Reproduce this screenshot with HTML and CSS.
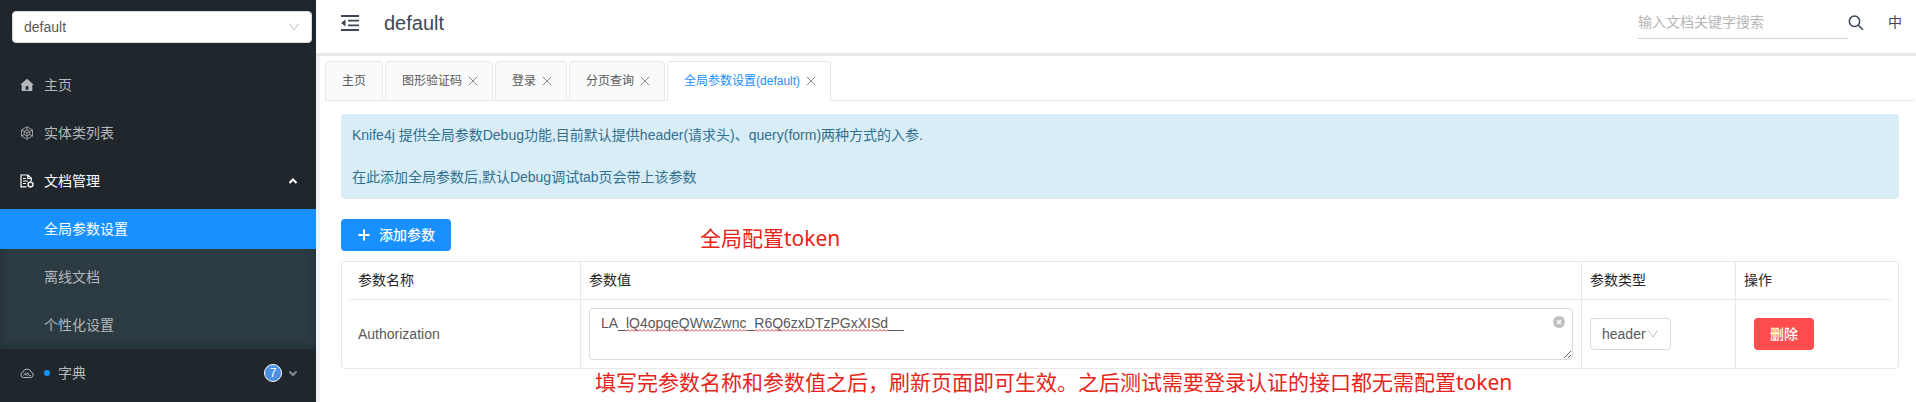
FILE: index.html
```html
<!DOCTYPE html>
<html lang="zh-CN">
<head>
<meta charset="utf-8">
<meta name="viewport" content="width=device-width, initial-scale=1">
<title>全局参数设置</title>
<link rel="stylesheet" href="styles.css">
</head>
<body>
<div class="layout">
  <aside class="sidebar">
    <div class="picker picker-group">
      <select class="picker-field" aria-label="分组">
        <option>default</option>
      </select>
      <svg class="picker-arrow" viewBox="0 0 12 12" aria-hidden="true"><path d="M1.5 2.5 6 9l4.5-6.5"/></svg>
    </div>
    <nav class="menu">
      <a class="menu-item" href="#home">
        <svg class="menu-icon" viewBox="0 0 14 14" aria-hidden="true"><path fill="currentColor" fill-rule="evenodd" d="M7 .8 13.2 6.300V7H12.300V13H1.700V7H.8V6.300ZM5.600 11.800H8.400V8.200H5.600Z"/></svg>
        <span>主页</span>
      </a>
      <a class="menu-item" href="#models">
        <svg class="menu-icon" viewBox="0 0 14 14" fill="none" stroke="currentColor" aria-hidden="true"><path stroke-width=".8" d="M7 .8 12.500 3.900V10.100L7 13.200 1.500 10.100V3.900ZM7 .8V4L9.800 5.500V8.500L7 10 4.200 8.500V5.500L7 4M1.500 3.900 4.200 5.500M12.500 3.900 9.800 5.500M1.500 10.100 4.200 8.500M12.500 10.100 9.800 8.500M7 13.200V7L4.200 5.500M7 7 9.800 5.500"/></svg>
        <span>实体类列表</span>
      </a>
      <a class="menu-item is-open" href="#docs">
        <svg class="menu-icon" viewBox="0 0 14 14" fill="none" stroke="currentColor" aria-hidden="true"><path stroke-width="1.200" d="M6.500 12.900H1V1H8L11.300 4.300V7M7.800 1V4.500H11.300M3 4.500H5.800M3 7H8M3 9.500H6"/><circle stroke-width="1.300" cx="10.500" cy="10.500" r="2.400"/><path stroke-width="1.200" d="M10.500 7.200V8M10.500 13V13.800M7.600 8.900 8.300 9.300M12.700 11.700 13.400 12.100M7.600 12.100 8.300 11.700M12.700 9.300 13.400 8.900"/></svg>
        <span>文档管理</span>
        <svg class="menu-caret" viewBox="0 0 10 10" aria-hidden="true"><path d="M1.500 7 5 3.500 8.500 7"/></svg>
      </a>
      <div class="submenu">
        <a class="submenu-item is-active" href="#global">全局参数设置</a>
        <a class="submenu-item" href="#offline">离线文档</a>
        <a class="submenu-item" href="#custom">个性化设置</a>
      </div>
      <a class="menu-item" href="#dict">
        <svg class="menu-icon" viewBox="0 0 14 14" fill="none" stroke="currentColor" aria-hidden="true"><path d="M3.500 11.500H10.700A2.700 2.700 0 0 0 11.200 6.200 4.300 4.300 0 0 0 2.900 6.200 2.700 2.700 0 0 0 3.500 11.500Z"/><path stroke-width=".8" d="M3.500 9.500 5.500 6.800 6 9.500M7 9.500V7H8L9 9.500H11"/></svg>
        <span class="dot"></span>
        <span>字典</span>
        <span class="badge">7</span>
        <svg class="menu-caret" viewBox="0 0 10 10" aria-hidden="true"><path d="M1.500 3.500 5 7 8.500 3.500"/></svg>
      </a>
    </nav>
  </aside>

  <div class="main">
    <header class="topbar">
      <button class="icon-button" type="button" aria-label="收起菜单">
        <svg class="fold-icon" viewBox="0 0 18 16" aria-hidden="true"><path fill="currentColor" d="M0 0H18V2H0ZM7 4.700H18V6.500H7ZM7 9.500H18V11.300H7ZM0 14H18V16H0ZM0 8 4.500 4.500V11.500Z"/></svg>
      </button>
      <h1 class="topbar-title">default</h1>
      <input class="search" type="text" placeholder="输入文档关键字搜索" aria-label="搜索">
      <button class="icon-button" type="button" aria-label="搜索">
        <svg class="search-icon" viewBox="0 0 16 16" fill="none" stroke="currentColor" aria-hidden="true"><circle cx="6.500" cy="6.300" r="5.200" stroke-width="1.500"/><path stroke-width="1.600" d="M10.300 10.200 15 14.800"/></svg>
      </button>
      <button class="language" type="button">中</button>
    </header>

    <div class="tabs">
      <div class="tab"><a href="#home">主页</a></div>
      <div class="tab"><a href="#captcha">图形验证码</a><button class="tab-close" type="button" aria-label="关闭"><svg viewBox="0 0 10 10" aria-hidden="true"><path d="M.8.8 9.200 9.200M9.200.8.8 9.200"/></svg></button></div>
      <div class="tab"><a href="#login">登录</a><button class="tab-close" type="button" aria-label="关闭"><svg viewBox="0 0 10 10" aria-hidden="true"><path d="M.8.8 9.200 9.200M9.200.8.8 9.200"/></svg></button></div>
      <div class="tab"><a href="#page">分页查询</a><button class="tab-close" type="button" aria-label="关闭"><svg viewBox="0 0 10 10" aria-hidden="true"><path d="M.8.8 9.200 9.200M9.200.8.8 9.200"/></svg></button></div>
      <div class="tab is-active"><a href="#global">全局参数设置(default)</a><button class="tab-close" type="button" aria-label="关闭"><svg viewBox="0 0 10 10" aria-hidden="true"><path d="M.8.8 9.200 9.200M9.200.8.8 9.200"/></svg></button></div>
    </div>

    <main class="content">
      <div class="alert">
        <p>Knife4j 提供全局参数Debug功能,目前默认提供header(请求头)、query(form)两种方式的入参.</p>
        <p>在此添加全局参数后,默认Debug调试tab页会带上该参数</p>
      </div>

      <div class="toolbar">
        <button class="button button-primary" type="button">
          <svg class="button-icon" viewBox="0 0 14 14" aria-hidden="true"><path d="M7 1.500V12.500M1.500 7H12.500"/></svg>
          <span>添加参数</span>
        </button>
        <span class="note">全局配置token</span>
      </div>

      <div class="table-box">
        <table class="params">
          <thead>
            <tr><th class="col-name">参数名称</th><th class="col-value">参数值</th><th class="col-type">参数类型</th><th class="col-action">操作</th></tr>
          </thead>
          <tbody>
            <tr>
              <td>Authorization</td>
              <td>
                <div class="value-box">
                  <textarea class="value" aria-label="参数值" spellcheck="false">LA_lQ4opqeQWwZwnc_R6Q6zxDTzPGxXISd__</textarea>
                  <svg class="squiggle" aria-hidden="true">
                    <defs><pattern id="wave" width="4" height="3" patternUnits="userSpaceOnUse"><path d="M0 2.500 2 .5 4 2.500" fill="none" stroke="#e03a3a"/></pattern></defs>
                    <rect width="120" height="3" fill="url(#wave)"/>
                    <rect x="128" width="134" height="3" fill="url(#wave)"/>
                  </svg>
                  <button class="clear" type="button" aria-label="清除"><svg viewBox="0 0 12 12" aria-hidden="true"><circle cx="6" cy="6" r="6" fill="#bfbfbf"/><path d="M4 4 8 8M8 4 4 8" stroke="#fff" stroke-width="1.200"/></svg></button>
                </div>
              </td>
              <td>
                <div class="picker picker-type">
                  <select class="picker-field" aria-label="参数类型">
                    <option>header</option>
                    <option>query</option>
                  </select>
                  <svg class="picker-arrow" viewBox="0 0 12 12" aria-hidden="true"><path d="M1.500 2.500 6 9l4.500-6.500"/></svg>
                </div>
              </td>
              <td><button class="button button-danger" type="button">删除</button></td>
            </tr>
          </tbody>
        </table>
      </div>
      <p class="note note-below">填写完参数名称和参数值之后，刷新页面即可生效。之后测试需要登录认证的接口都无需配置token</p>
    </main>
  </div>
</div>
</body>
</html>
```

FILE: styles.css
```css
* {
  box-sizing: border-box;
}

body {
  margin: 0;
  font: 14px/21px "Liberation Sans", "Noto Sans CJK SC", sans-serif;
  color: #595959;
  background: #fff;
}

button,
input,
select,
textarea {
  font: inherit;
  color: inherit;
}

button {
  border: 0;
  padding: 0;
  background: none;
}

a {
  color: inherit;
  text-decoration: none;
}

p {
  margin: 0;
}

.layout {
  display: flex;
  min-height: 100vh;
}

/* Sidebar */

.sidebar {
  flex: none;
  width: 316px;
  padding-top: 11px;
  background: #1f272c;
}

.picker {
  display: grid;
  align-items: center;
}

.picker-field {
  grid-area: 1 / 1;
  width: 100%;
  height: 32px;
  padding: 0 11px;
  border: 1px solid #d9d9d9;
  border-radius: 4px;
  background: #fff;
  appearance: none;
}

.picker-arrow {
  grid-area: 1 / 1;
  justify-self: end;
  width: 12px;
  height: 12px;
  margin-right: 12px;
  fill: none;
  stroke: #bfbfbf;
  pointer-events: none;
}

.picker-group {
  margin: 0 4px 22px 12px;
}

.picker-type {
  width: 81px;
}

.menu {
  display: flex;
  flex-direction: column;
  color: #b4b8ba;
}

.menu-item {
  display: flex;
  align-items: center;
  gap: 10px;
  height: 40px;
  margin-bottom: 8px;
  padding: 0 18px 0 20px;
}

.menu-item.is-open {
  color: #fff;
}

.menu-icon {
  width: 14px;
  height: 14px;
}

.menu-caret {
  width: 10px;
  height: 10px;
  margin-left: auto;
  fill: none;
  stroke: currentColor;
  stroke-width: 2;
}

.dot {
  width: 6px;
  height: 6px;
  margin-right: -2px;
  border-radius: 50%;
  background: #1890ff;
}

.badge {
  width: 18px;
  height: 18px;
  margin-left: auto;
  border: 1px solid #fff;
  border-radius: 50%;
  font-size: 12px;
  line-height: 16px;
  text-align: center;
  color: #fff;
  background: #4a90e2;
}

.badge + .menu-caret {
  margin-left: -4px;
  stroke: #858b8f;
}

.submenu {
  display: flex;
  flex-direction: column;
  gap: 8px;
  margin-bottom: 4px;
  padding-bottom: 4px;
  background: #2c3a42;
  box-shadow: inset 0 -2px 8px rgba(0, 0, 0, 0.2);
}

.submenu-item {
  padding-left: 44px;
  line-height: 40px;
}

.submenu-item.is-active {
  color: #fff;
  background: #1890ff;
}

/* Main column */

.main {
  flex: 1;
  min-width: 0;
  border-left: 4px solid #f0f2f5;
}

.topbar {
  display: flex;
  align-items: center;
  height: 56px;
  margin: 0 0 5px -4px;
  padding: 0 14px 8px 25px;
  border-bottom: 3px solid #e8e9eb;
  color: #3d4757;
  background: #fff;
}

.icon-button {
  display: flex;
}

.fold-icon {
  width: 18px;
  height: 16px;
}

.topbar-title {
  margin: 0 auto 0 25px;
  font-size: 20px;
  font-weight: 400;
  line-height: 24px;
}

.search {
  width: 210px;
  height: 33px;
  padding: 0;
  border: 0;
  border-bottom: 1px solid #d0d2d5;
  background: none;
}

.search::placeholder {
  color: #b5b5b5;
}

.search-icon {
  width: 16px;
  height: 16px;
}

.language {
  margin-left: 24px;
}

.tabs {
  display: flex;
  gap: 2px;
  margin: 0 2px 13px 5px;
  box-shadow: inset 0 -1px #e8e8e8;
}

.tab {
  display: flex;
  align-items: center;
  height: 40px;
  padding: 0 16px;
  border: 1px solid #e8e8e8;
  border-radius: 4px 4px 0 0;
  font-size: 12px;
  background: #fafafa;
}

.tab.is-active {
  border-bottom-color: #fff;
  color: #1890ff;
  background: #fff;
}

.tab-close {
  display: flex;
  width: 14px;
  padding-left: 6px;
}

.tab-close svg {
  flex: none;
  width: 10px;
  height: 10px;
  fill: none;
  stroke: #8c8c8c;
}

.content {
  padding: 0 17px 7px 21px;
}

.alert {
  display: flex;
  flex-direction: column;
  gap: 21px;
  padding: 11px;
  border-radius: 4px;
  color: #31708f;
  background: #d9edf7;
}

.toolbar {
  display: flex;
  align-items: flex-end;
  gap: 249px;
  margin: 20px 0 10px;
}

.button {
  height: 32px;
  padding: 0 16px;
  border-radius: 4px;
  font-weight: 500;
  color: #fff;
}

.button-primary {
  display: flex;
  align-items: center;
  gap: 8px;
  background: #1890ff;
}

.button-danger {
  margin-left: 10px;
  background: #ff4d4f;
}

.button-icon {
  width: 14px;
  height: 14px;
  stroke: currentColor;
  stroke-width: 2;
}

.note {
  font-family: "Noto Sans", "Noto Sans CJK SC", sans-serif;
  font-size: 21px;
  line-height: 26px;
  color: #e8251a;
}

.note-below {
  padding-left: 254px;
}

/* Parameter table */

.table-box {
  padding: 0 8px;
  border: 1px solid #e8e8e8;
  border-radius: 4px;
}

.params {
  width: 100%;
  border-spacing: 0;
  table-layout: fixed;
}

.params th,
.params td {
  padding: 8px;
  border-right: 1px solid #e8e8e8;
  text-align: left;
  font-weight: 400;
}

.params th:last-child,
.params td:last-child {
  border-right: 0;
}

.params th {
  border-bottom: 1px solid #e8e8e8;
  color: #262626;
}

.col-name {
  width: 15%;
}

.col-value {
  width: 65%;
}

.col-type,
.col-action {
  width: 10%;
}

.value-box {
  position: relative;
  display: flex;
}

.value {
  width: 100%;
  height: 52px;
  padding: 4px 11px;
  border: 1px solid #d9d9d9;
  border-radius: 4px;
  resize: vertical;
}

.squiggle {
  position: absolute;
  top: 21px;
  left: 37px;
  width: 262px;
  height: 3px;
  pointer-events: none;
}

.clear {
  position: absolute;
  top: 8px;
  right: 8px;
  display: flex;
}

.clear svg {
  width: 12px;
  height: 12px;
}
```
